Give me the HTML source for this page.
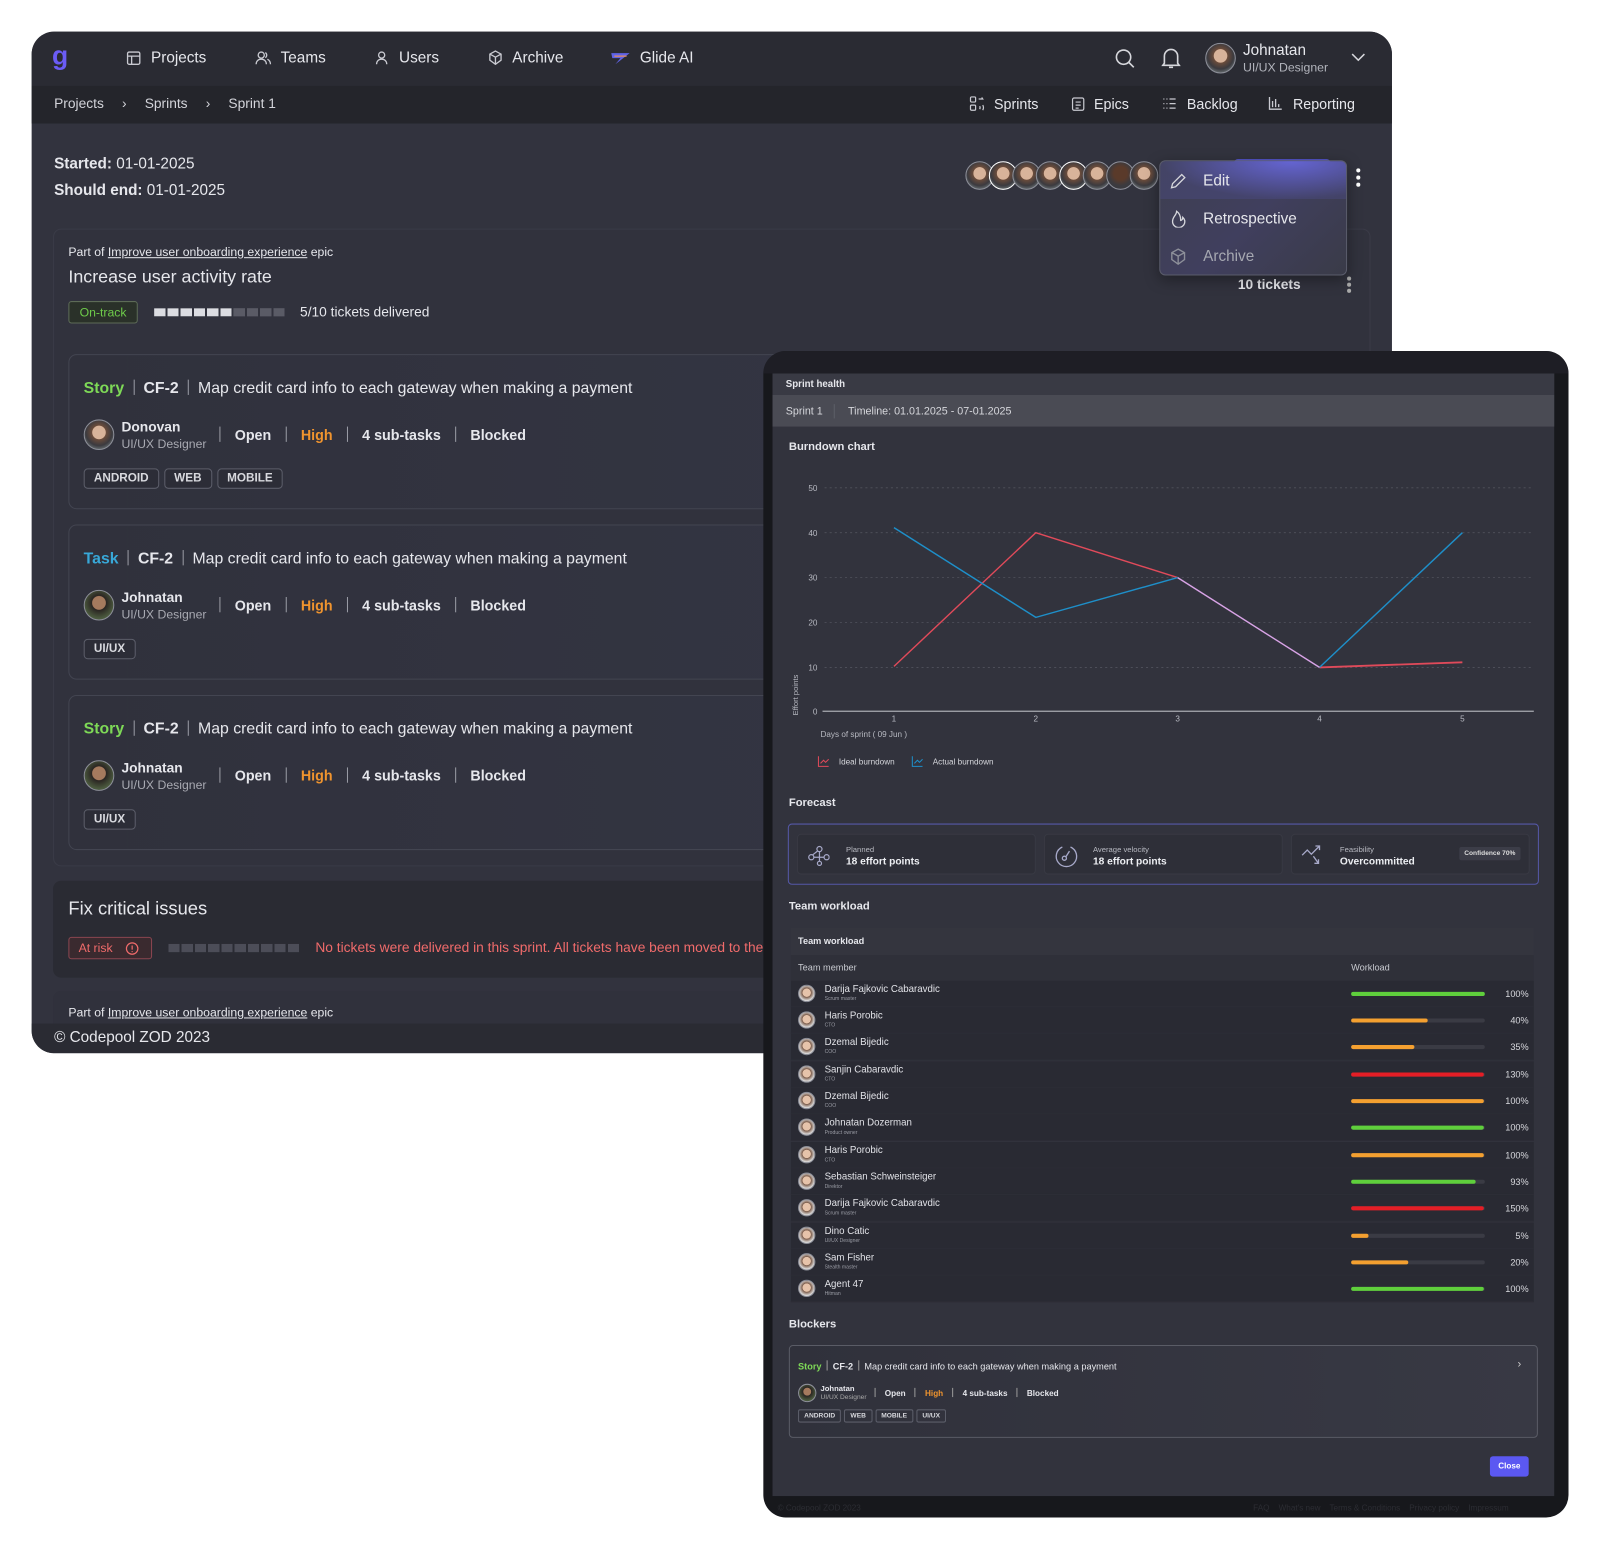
<!DOCTYPE html>
<html><head><meta charset="utf-8">
<style>
*{box-sizing:border-box;margin:0;padding:0}
html,body{width:1600px;height:1549px;overflow:hidden;background:#fff;font-family:"Liberation Sans",sans-serif}
#s{position:absolute;left:0;top:0;width:1560px;height:1510px;transform:scale(1.0205);transform-origin:0 0}
.a{position:absolute}
.t{position:absolute;white-space:nowrap;color:#e6e7ec}
.win{left:31px;top:31px;width:1333px;height:1001px;border-radius:22px;background:#32333e;overflow:hidden}
.nav{left:0;top:0;width:100%;height:53px;background:#2a2b33}
.bc{left:0;top:53px;width:100%;height:37px;background:#24252b}
.av{position:absolute;border-radius:50%;background:radial-gradient(circle at 50% 42%,#d8b39a 0 30%,#6b4c3b 32%,#3b3a3f 60%,#9aa 100%);border:1.5px solid #8d8f99}
.card{position:absolute;border:1px solid #434551;border-radius:8px;background:linear-gradient(90deg,#30313c,#353746)}
.tag{display:inline-block;border:1px solid #5c5e6a;border-radius:4px;padding:3px 9px;font-size:11.5px;font-weight:bold;color:#d8d9de;margin-right:5px;background:#2c2d37}
.sep{display:inline-block;width:1px;height:15px;background:#9a9ca5;margin:0 14px;vertical-align:-2px}
.row{font-size:14px;font-weight:bold;color:#e6e7ec}
.modal{left:748px;top:344px;width:789px;height:1143px;border-radius:22px;background:#17181c;overflow:hidden}
.wl{position:absolute;left:775px;width:728px;height:26px;border-bottom:1px solid #2c2d36;background:#292a33}
.wl .n{position:absolute;left:33px;top:3px;font-size:9.5px;color:#e2e3e8}
.wl .r{position:absolute;left:33px;top:15px;font-size:5px;color:#9a9ca5}
.wl .tr{position:absolute;left:549px;top:11px;width:131px;height:4px;border-radius:2px;background:#3a3b44}
.wl .b{position:absolute;left:0;top:0;height:4px;border-radius:2px}
.wl .p{position:absolute;right:5px;top:8px;font-size:9px;color:#d8d9de}
.wl .av{left:7px;top:4px;width:17px;height:17px;background:radial-gradient(circle at 50% 45%,#e6c3aa 0 35%,#7a5a48 38%,#ddd 70%)}
.fc{position:absolute;top:817px;width:234px;height:40px;border-radius:4px;background:#2e2f38;border:1px solid #383943}
.fc .l{position:absolute;left:47px;top:10px;font-size:7.5px;color:#b8bac2}
.fc .v{position:absolute;left:47px;top:21px;font-size:10px;font-weight:bold;color:#eceef2}
.tt{font-size:15.5px}
</style></head><body><div id="s">

<div class="a win">
 <div class="a nav"></div>
 <div class="a bc"></div>
 <div class="t" style="left:20px;top:8px;font-size:26px;font-weight:bold;color:#6b5cf6">g</div>
 <svg class="a" style="left:93px;top:19px" width="14" height="14" viewBox="0 0 14 14" fill="none" stroke="#c9cad1" stroke-width="1.3"><rect x="1" y="1" width="12" height="12" rx="1.5"/><path d="M1 5h12M5 5v8"/></svg>
 <div class="t" style="left:117px;top:17px;font-size:15px">Projects</div>
 <svg class="a" style="left:219px;top:19px" width="16" height="14" viewBox="0 0 16 14" fill="none" stroke="#c9cad1" stroke-width="1.3"><circle cx="6" cy="4" r="3"/><path d="M1 13c0-3 2-5 5-5s5 2 5 5M10 1.5a3 3 0 0 1 0 5M12 8c2 1 3 3 3 5"/></svg>
 <div class="t" style="left:244px;top:17px;font-size:15px">Teams</div>
 <svg class="a" style="left:337px;top:19px" width="12" height="14" viewBox="0 0 12 14" fill="none" stroke="#c9cad1" stroke-width="1.3"><circle cx="6" cy="4" r="3"/><path d="M1 13c0-3 2-5 5-5s5 2 5 5"/></svg>
 <div class="t" style="left:360px;top:17px;font-size:15px">Users</div>
 <svg class="a" style="left:447px;top:18px" width="15" height="15" viewBox="0 0 15 15" fill="none" stroke="#c9cad1" stroke-width="1.3"><path d="M7.5 1 13 4v6l-5.5 4L2 10V4z M2 4l5.5 3L13 4M7.5 7v7"/></svg>
 <div class="t" style="left:471px;top:17px;font-size:15px">Archive</div>
 <svg class="a" style="left:567px;top:19px" width="20" height="14" viewBox="0 0 20 14"><path d="M1 2h18L5 13l5-6H2z" fill="#5f63e8"/><path d="M4 5h12" stroke="#e58d5a" stroke-width="1.2"/></svg>
 <div class="t" style="left:596px;top:17px;font-size:15px">Glide AI</div>
 <svg class="a" style="left:1061px;top:16px" width="21" height="21" viewBox="0 0 21 21" fill="none" stroke="#d6d7dc" stroke-width="1.6"><circle cx="9" cy="9" r="7"/><path d="M14 14l5 5"/></svg>
 <svg class="a" style="left:1107px;top:15px" width="19" height="22" viewBox="0 0 19 22" fill="none" stroke="#d6d7dc" stroke-width="1.6"><path d="M3 16V9a6.5 6.5 0 0 1 13 0v7l1.5 2h-16z M7.5 20h4"/></svg>
 <div class="av" style="left:1150px;top:11px;width:30px;height:30px"></div>
 <div class="t" style="left:1187px;top:10px;font-size:15px">Johnatan</div>
 <div class="t" style="left:1187px;top:28px;font-size:12px;color:#b2b4bc">UI/UX Designer</div>
 <svg class="a" style="left:1293px;top:21px" width="14" height="9" viewBox="0 0 14 9" fill="none" stroke="#d6d7dc" stroke-width="1.5"><path d="M1 1l6 6 6-6"/></svg>
 <div class="t" style="left:22px;top:63px;font-size:13.5px;color:#d3d4da">Projects <span style="margin:0 14px">&#8250;</span> Sprints <span style="margin:0 14px">&#8250;</span> Sprint 1</div>
 <svg class="a" style="left:919px;top:63px" width="16" height="15" viewBox="0 0 16 15" fill="none" stroke="#c9cad1" stroke-width="1.2"><rect x="1" y="1" width="5" height="5" rx="1"/><rect x="1" y="9" width="5" height="5" rx="1"/><path d="M9 3h4l-1-1.5M10 10a3 3 0 0 1 0 3M13 9a5 5 0 0 1 0 5"/></svg>
 <div class="t" style="left:943px;top:63px;font-size:14px">Sprints</div>
 <svg class="a" style="left:1019px;top:64px" width="13" height="14" viewBox="0 0 13 14" fill="none" stroke="#c9cad1" stroke-width="1.2"><rect x="1" y="1" width="11" height="12" rx="1.5"/><path d="M4 5h5M4 8h5M4 11h3"/></svg>
 <div class="t" style="left:1041px;top:63px;font-size:14px">Epics</div>
 <svg class="a" style="left:1108px;top:65px" width="14" height="11" viewBox="0 0 14 11" fill="none" stroke="#c9cad1" stroke-width="1.2"><path d="M1 1h1M4 1h1M7 1h6M1 5.5h1M4 5.5h1M7 5.5h6M1 10h1M4 10h1M7 10h6"/></svg>
 <div class="t" style="left:1132px;top:63px;font-size:14px">Backlog</div>
 <svg class="a" style="left:1212px;top:63px" width="14" height="14" viewBox="0 0 14 14" fill="none" stroke="#c9cad1" stroke-width="1.3"><path d="M1 1v12h12M4 11V5M7 11V3M10 11V8"/></svg>
 <div class="t" style="left:1236px;top:63px;font-size:14px">Reporting</div>

 <div class="t" style="left:22px;top:121px;font-size:15px"><b>Started:</b> 01-01-2025</div>
 <div class="t" style="left:22px;top:147px;font-size:15px"><b>Should end:</b> 01-01-2025</div>
 <div class="av" style="left:915px;top:127px;width:28px;height:28px"></div>
 <div class="av" style="left:938px;top:127px;width:28px;height:28px;border-color:#fff"></div>
 <div class="av" style="left:961px;top:127px;width:28px;height:28px"></div>
 <div class="av" style="left:984px;top:127px;width:28px;height:28px"></div>
 <div class="av" style="left:1007px;top:127px;width:28px;height:28px;border-color:#fff"></div>
 <div class="av" style="left:1030px;top:127px;width:28px;height:28px"></div>
 <div class="av" style="left:1053px;top:127px;width:28px;height:28px;background:radial-gradient(circle at 50% 42%,#5a3a2a 0 32%,#3b3a3f 60%)"></div>
 <div class="av" style="left:1076px;top:127px;width:28px;height:28px"></div>
 <div class="a" style="left:1178px;top:125px;width:95px;height:8px;border-radius:4px;background:#5d5ef0"></div>
 <div class="a" style="left:1298px;top:134px;width:4px;height:4px;border-radius:50%;background:#fff;box-shadow:0 7px 0 #fff,0 14px 0 #fff"></div>

 <div class="card" style="left:21px;top:193px;width:1291px;height:625px;background:#31323d;border-color:#3a3b47"></div>
 <div class="t" style="left:36px;top:209px;font-size:12px">Part of <u>Improve user onboarding experience</u> epic</div>
 <div class="t" style="left:36px;top:230px;font-size:17.5px">Increase user activity rate</div>
 <div class="a" style="left:36px;top:264px;width:68px;height:22px;border:1px solid #5d6b57;border-radius:3px;background:#2a3129;color:#6ecb4a;font-size:12px;text-align:center;line-height:20px">On-track</div>
 <div class="a" style="left:120px;top:271px;height:8px;width:130px;background:repeating-linear-gradient(90deg,#dcdde2 0 11px,transparent 11px 13px);clip-path:inset(0 52px 0 0)"></div>
 <div class="a" style="left:198px;top:271px;height:8px;width:52px;background:repeating-linear-gradient(90deg,#5a5b66 0 11px,transparent 11px 13px)"></div>
 <div class="t" style="left:263px;top:267px;font-size:13.5px">5/10 tickets delivered</div>
 <div class="t" style="left:1182px;top:240px;font-size:13.5px;font-weight:bold">10 tickets</div>
 <div class="a" style="left:1289px;top:240px;width:4px;height:4px;border-radius:50%;background:#aaa;box-shadow:0 6px 0 #aaa,0 12px 0 #aaa"></div>

 <div class="card" style="left:36px;top:316px;width:1260px;height:152px"></div>
 <div class="t tt" style="left:51px;top:341px"><b style="color:#7ed957">Story</b><span class="sep" style="margin:0 9px"></span><b>CF-2</b><span class="sep" style="margin:0 9px"></span>Map credit card info to each gateway when making a payment</div>
 <div class="av" style="left:51px;top:380px;width:30px;height:30px"></div>
 <div class="t" style="left:88px;top:380px;font-size:13.5px;font-weight:bold">Donovan</div>
 <div class="t" style="left:88px;top:397px;font-size:12px;color:#a8aab2">UI/UX Designer</div>
 <div class="t row" style="left:170px;top:387px"><span class="sep"></span>Open<span class="sep"></span><span style="color:#f0942e">High</span><span class="sep"></span>4 sub-tasks<span class="sep"></span>Blocked</div>
 <div class="t" style="left:51px;top:428px"><span class="tag">ANDROID</span><span class="tag">WEB</span><span class="tag">MOBILE</span></div>

 <div class="card" style="left:36px;top:483px;width:1260px;height:152px"></div>
 <div class="t tt" style="left:51px;top:508px"><b style="color:#38a8d8">Task</b><span class="sep" style="margin:0 9px"></span><b>CF-2</b><span class="sep" style="margin:0 9px"></span>Map credit card info to each gateway when making a payment</div>
 <div class="av" style="left:51px;top:547px;width:30px;height:30px;background:radial-gradient(circle at 50% 42%,#a57a5e 0 30%,#2a2522 33%,#4b5a3e 70%)"></div>
 <div class="t" style="left:88px;top:547px;font-size:13.5px;font-weight:bold">Johnatan</div>
 <div class="t" style="left:88px;top:564px;font-size:12px;color:#a8aab2">UI/UX Designer</div>
 <div class="t row" style="left:170px;top:554px"><span class="sep"></span>Open<span class="sep"></span><span style="color:#f0942e">High</span><span class="sep"></span>4 sub-tasks<span class="sep"></span>Blocked</div>
 <div class="t" style="left:51px;top:595px"><span class="tag">UI/UX</span></div>

 <div class="card" style="left:36px;top:650px;width:1260px;height:152px"></div>
 <div class="t tt" style="left:51px;top:675px"><b style="color:#7ed957">Story</b><span class="sep" style="margin:0 9px"></span><b>CF-2</b><span class="sep" style="margin:0 9px"></span>Map credit card info to each gateway when making a payment</div>
 <div class="av" style="left:51px;top:714px;width:30px;height:30px;background:radial-gradient(circle at 50% 42%,#a57a5e 0 30%,#2a2522 33%,#4b5a3e 70%)"></div>
 <div class="t" style="left:88px;top:714px;font-size:13.5px;font-weight:bold">Johnatan</div>
 <div class="t" style="left:88px;top:731px;font-size:12px;color:#a8aab2">UI/UX Designer</div>
 <div class="t row" style="left:170px;top:721px"><span class="sep"></span>Open<span class="sep"></span><span style="color:#f0942e">High</span><span class="sep"></span>4 sub-tasks<span class="sep"></span>Blocked</div>
 <div class="t" style="left:51px;top:762px"><span class="tag">UI/UX</span></div>

 <div class="a" style="left:21px;top:832px;width:1291px;height:95px;border-radius:8px;background:#2a2b33"></div>
 <div class="t" style="left:36px;top:849px;font-size:18px">Fix critical issues</div>
 <div class="a" style="left:36px;top:887px;width:82px;height:22px;border:1px solid #8a4650;border-radius:3px;background:#3a2a2f;color:#f06b6b;font-size:12px;line-height:20px;padding-left:9px;white-space:nowrap">At risk<svg style="position:absolute;left:55px;top:4px" width="13" height="13" viewBox="0 0 13 13" fill="none" stroke="#f06b6b" stroke-width="1.2"><circle cx="6.5" cy="6.5" r="5.6"/><path d="M6.5 3.5v4M6.5 9v1"/></svg></div>
 <div class="a" style="left:134px;top:894px;height:8px;width:128px;background:repeating-linear-gradient(90deg,#4c4d58 0 11px,transparent 11px 13px)"></div>
 <div class="t" style="left:278px;top:890px;font-size:13.5px;color:#f06b6b">No tickets were delivered in this sprint. All tickets have been moved to the next sprint.</div>
 <div class="a" style="left:21px;top:940px;width:1291px;height:80px;border-radius:8px;background:#30313c"></div>
 <div class="t" style="left:36px;top:954px;font-size:12px">Part of <u>Improve user onboarding experience</u> epic</div>
 <div class="a" style="left:0;top:972px;width:100%;height:29px;background:#2a2b33"></div>
 <div class="t" style="left:22px;top:977px;font-size:15px">© Codepool ZOD 2023</div>

 <div class="a" style="left:1105px;top:126px;width:184px;height:113px;border:1px solid #5a5c6b;border-radius:6px;background:linear-gradient(135deg,#3e3f50,#403f5e 50%,#3a3b48);box-shadow:0 4px 14px rgba(0,0,0,.35)"></div>
 <div class="a" style="left:1106px;top:127px;width:182px;height:37px;border-radius:5px 5px 0 0;background:radial-gradient(ellipse at 70% 0%,rgba(110,110,240,.8),rgba(80,80,150,.3) 70%)"></div>
 <svg class="a" style="left:1115px;top:138px" width="17" height="17" viewBox="0 0 17 17" fill="none" stroke="#d6d7dc" stroke-width="1.3"><path d="M2 15l1-4L12 2l3 3-9 9z"/></svg>
 <div class="t" style="left:1148px;top:138px;font-size:15px">Edit</div>
 <svg class="a" style="left:1117px;top:175px" width="14" height="17" viewBox="0 0 14 17" fill="none" stroke="#d6d7dc" stroke-width="1.3"><path d="M5 1c0 4-4 5-4 10a6 6 0 0 0 12 0c0-2-1-3-2-4 0 2-1 3-2 3 0-4-1-7-4-9z"/></svg>
 <div class="t" style="left:1148px;top:175px;font-size:15px">Retrospective</div>
 <svg class="a" style="left:1115px;top:212px" width="17" height="17" viewBox="0 0 15 15" fill="none" stroke="#8d8f99" stroke-width="1.2"><path d="M7.5 1 13 4v6l-5.5 4L2 10V4z M2 4l5.5 3L13 4M7.5 7v7"/></svg>
 <div class="t" style="left:1148px;top:212px;font-size:15px;color:#a6a8b1">Archive</div>
</div>

<div class="a modal">
 <div class="a" style="left:0;top:0;width:100%;height:22px;background:#202128;opacity:.8"></div>
 <div class="a" style="left:9px;top:22px;width:766px;height:1100px;background:#32333d"></div>
 <div class="a" style="left:9px;top:22px;width:766px;height:21px;background:#393a44"></div>
 <div class="a" style="left:9px;top:43px;width:766px;height:31px;background:#4a4b54"></div>
</div>
<div class="t" style="left:770px;top:371px;font-size:9.5px;font-weight:bold">Sprint health</div>
<div class="t" style="left:770px;top:397px;font-size:10.5px;color:#d6d7dc">Sprint 1</div>
<div class="a" style="left:817px;top:396px;width:1px;height:14px;background:#5d5f68"></div>
<div class="t" style="left:831px;top:397px;font-size:10.5px;color:#d6d7dc">Timeline: 01.01.2025 - 07-01.2025</div>
<div class="t" style="left:773px;top:432px;font-size:11px;font-weight:bold">Burndown chart</div>

<svg class="a" style="left:760px;top:460px" width="760" height="300" viewBox="760 460 760 300" font-family="Liberation Sans" font-size="8" fill="#b8bac2">
 <g stroke="#51535d" stroke-dasharray="2 3" stroke-width="0.8">
  <line x1="808" y1="478" x2="1503" y2="478"/><line x1="808" y1="522" x2="1503" y2="522"/><line x1="808" y1="566" x2="1503" y2="566"/><line x1="808" y1="610" x2="1503" y2="610"/><line x1="808" y1="654" x2="1503" y2="654"/>
 </g>
 <line x1="806" y1="697" x2="1503" y2="697" stroke="#a9abb2" stroke-width="1.2"/>
 <g text-anchor="end"><text x="801" y="481">50</text><text x="801" y="525">40</text><text x="801" y="569">30</text><text x="801" y="613">20</text><text x="801" y="657">10</text><text x="801" y="700">0</text></g>
 <g text-anchor="middle"><text x="876" y="707">1</text><text x="1015" y="707">2</text><text x="1154" y="707">3</text><text x="1293" y="707">4</text><text x="1433" y="707">5</text></g>
 <text x="804" y="722">Days of sprint ( 09 Jun )</text>
 <text transform="translate(782 701) rotate(-90)" font-size="7.5">Effort points</text>
 <polyline points="876,653 1015,522 1154,566" fill="none" stroke="#e04a5a" stroke-width="1.4"/>
 <polyline points="1293,654 1433,649" fill="none" stroke="#e04a5a" stroke-width="1.8"/>
 <polyline points="876,517 1015,605 1154,566" fill="none" stroke="#1e8fc9" stroke-width="1.4"/>
 <polyline points="1293,654 1433,522" fill="none" stroke="#1e8fc9" stroke-width="1.4"/>
 <polyline points="1154,566 1293,654" fill="none" stroke="#d8a3e6" stroke-width="1.4"/>
 <path d="M802 741v10h10M804 748l3-3 2 2 3-3" fill="none" stroke="#e04a5a" stroke-width="1"/>
 <text x="822" y="749" fill="#d6d7dc">Ideal burndown</text>
 <path d="M894 741v10h10M896 748l3-3 2 2 3-3" fill="none" stroke="#1e8fc9" stroke-width="1"/>
 <text x="914" y="749" fill="#d6d7dc">Actual burndown</text>
 <line x1="773" y1="766" x2="1507" y2="766" stroke="#40414b"/>
</svg>

<div class="t" style="left:773px;top:781px;font-size:11px;font-weight:bold">Forecast</div>
<div class="a" style="left:772px;top:807px;width:736px;height:60px;border:1px solid #5558a8;border-radius:4px"></div>
<div class="fc" style="left:781px"><svg class="a" style="left:9px;top:9px" width="22" height="22" viewBox="0 0 22 22" fill="none" stroke="#a7a9c9" stroke-width="1.2"><circle cx="4" cy="13" r="2.5"/><circle cx="12" cy="5" r="2.5"/><circle cx="12" cy="19" r="2"/><circle cx="19" cy="13" r="2.5"/><path d="M6.5 13h10M12 7.5v9.5M5 11l5-4"/></svg><div class="l">Planned</div><div class="v">18 effort points</div></div>
<div class="fc" style="left:1023px"><svg class="a" style="left:9px;top:9px" width="24" height="24" viewBox="0 0 24 24" fill="none" stroke="#a7a9c9" stroke-width="1.3"><path d="M8 3a10 10 0 1 0 8 0"/><circle cx="10" cy="14" r="2"/><path d="M11.5 12.5 15 7"/></svg><div class="l">Average velocity</div><div class="v">18 effort points</div></div>
<div class="fc" style="left:1265px"><svg class="a" style="left:9px;top:9px" width="24" height="22" viewBox="0 0 24 22" fill="none" stroke="#a7a9c9" stroke-width="1.3"><path d="M1 11l5-5 4 4 8-8M14 2h4v4M12 12l5 7M17 15v4h-4"/></svg><div class="l">Feasibility</div><div class="v">Overcommitted</div><div class="a" style="right:8px;top:12px;background:#3c3d48;border-radius:2px;font-size:6.5px;font-weight:bold;color:#ddd;padding:3px 5px">Confidence 70%</div></div>

<div class="t" style="left:773px;top:882px;font-size:11px;font-weight:bold">Team workload</div>
<div class="a" style="left:775px;top:909px;width:728px;height:27px;background:#34353e"></div>
<div class="t" style="left:782px;top:917px;font-size:9px;font-weight:bold">Team workload</div>
<div class="a" style="left:775px;top:936px;width:728px;height:25px;background:#2f3039"></div>
<div class="t" style="left:782px;top:943px;font-size:9px;color:#c8cad0">Team member</div>
<div class="t" style="left:1324px;top:943px;font-size:9px;color:#c8cad0">Workload</div>

<div class="wl" style="top:961px"><div class="av"></div><div class="n">Darija Fajkovic Cabaravdic</div><div class="r">Scrum master</div><div class="tr"><div class="b" style="width:131px;background:#5fcf3c"></div></div><div class="p">100%</div></div>
<div class="wl" style="top:987px"><div class="av"></div><div class="n">Haris Porobic</div><div class="r">CTO</div><div class="tr"><div class="b" style="width:75px;background:#f4a030"></div></div><div class="p">40%</div></div>
<div class="wl" style="top:1013px"><div class="av"></div><div class="n">Dzemal Bijedic</div><div class="r">COO</div><div class="tr"><div class="b" style="width:62px;background:#f4a030"></div></div><div class="p">35%</div></div>
<div class="wl" style="top:1040px"><div class="av"></div><div class="n">Sanjin Cabaravdic</div><div class="r">CTO</div><div class="tr"><div class="b" style="width:130px;background:#e41e26"></div></div><div class="p">130%</div></div>
<div class="wl" style="top:1066px"><div class="av"></div><div class="n">Dzemal Bijedic</div><div class="r">COO</div><div class="tr"><div class="b" style="width:130px;background:#f4a030"></div></div><div class="p">100%</div></div>
<div class="wl" style="top:1092px"><div class="av"></div><div class="n">Johnatan Dozerman</div><div class="r">Product owner</div><div class="tr"><div class="b" style="width:130px;background:#5fcf3c"></div></div><div class="p">100%</div></div>
<div class="wl" style="top:1119px"><div class="av"></div><div class="n">Haris Porobic</div><div class="r">CTO</div><div class="tr"><div class="b" style="width:130px;background:#f4a030"></div></div><div class="p">100%</div></div>
<div class="wl" style="top:1145px"><div class="av"></div><div class="n">Sebastian Schweinsteiger</div><div class="r">Direktor</div><div class="tr"><div class="b" style="width:122px;background:#5fcf3c"></div></div><div class="p">93%</div></div>
<div class="wl" style="top:1171px"><div class="av"></div><div class="n">Darija Fajkovic Cabaravdic</div><div class="r">Scrum master</div><div class="tr"><div class="b" style="width:130px;background:#e41e26"></div></div><div class="p">150%</div></div>
<div class="wl" style="top:1198px"><div class="av"></div><div class="n">Dino Catic</div><div class="r">UI/UX Designer</div><div class="tr"><div class="b" style="width:17px;background:#f4a030"></div></div><div class="p">5%</div></div>
<div class="wl" style="top:1224px"><div class="av"></div><div class="n">Sam Fisher</div><div class="r">Stealth master</div><div class="tr"><div class="b" style="width:56px;background:#f4a030"></div></div><div class="p">20%</div></div>
<div class="wl" style="top:1250px"><div class="av"></div><div class="n">Agent 47</div><div class="r">Hitman</div><div class="tr"><div class="b" style="width:130px;background:#5fcf3c"></div></div><div class="p">100%</div></div>

<div class="t" style="left:773px;top:1292px;font-size:11px;font-weight:bold">Blockers</div>
<div class="a" style="left:773px;top:1318px;width:734px;height:91px;border:1px solid #5a5c66;border-radius:4px;background:linear-gradient(90deg,#30313b,#383944)"></div>
<div class="t" style="left:782px;top:1333px;font-size:9px"><b style="color:#7ed957">Story</b><span style="display:inline-block;width:1px;height:10px;background:#999;margin:0 5px;vertical-align:-1px"></span><b>CF-2</b><span style="display:inline-block;width:1px;height:10px;background:#999;margin:0 5px;vertical-align:-1px"></span>Map credit card info to each gateway when making a payment</div>
<div class="t" style="left:1487px;top:1331px;font-size:11px;color:#ccc">&#8250;</div>
<div class="av" style="left:782px;top:1356px;width:18px;height:18px;background:radial-gradient(circle at 50% 42%,#a57a5e 0 30%,#2a2522 33%,#4b5a3e 70%)"></div>
<div class="t" style="left:804px;top:1356px;font-size:7.5px;font-weight:bold">Johnatan</div>
<div class="t" style="left:804px;top:1366px;font-size:6.5px;color:#aaa">UI/UX Designer</div>
<div class="t" style="left:857px;top:1360px;font-size:8px;font-weight:bold"><span style="display:inline-block;width:1px;height:9px;background:#999;margin:0 9px 0 0;vertical-align:-1px"></span>Open<span style="display:inline-block;width:1px;height:9px;background:#999;margin:0 9px;vertical-align:-1px"></span><span style="color:#f0942e">High</span><span style="display:inline-block;width:1px;height:9px;background:#999;margin:0 9px;vertical-align:-1px"></span>4 sub-tasks<span style="display:inline-block;width:1px;height:9px;background:#999;margin:0 9px;vertical-align:-1px"></span>Blocked</div>
<div class="t" style="left:782px;top:1384px;font-size:6.5px;font-weight:bold;color:#d8d9de"><span style="border:1px solid #5c5e6a;border-radius:2px;padding:2px 5px;margin-right:3px">ANDROID</span><span style="border:1px solid #5c5e6a;border-radius:2px;padding:2px 5px;margin-right:3px">WEB</span><span style="border:1px solid #5c5e6a;border-radius:2px;padding:2px 5px;margin-right:3px">MOBILE</span><span style="border:1px solid #5c5e6a;border-radius:2px;padding:2px 5px">UI/UX</span></div>
<div class="a" style="left:1460px;top:1427px;width:38px;height:20px;border-radius:3px;background:#5b58f2;color:#fff;font-size:8px;font-weight:bold;text-align:center;line-height:20px">Close</div>
<div class="t" style="left:762px;top:1473px;font-size:8px;color:#2c2d33">© Codepool ZOD 2023</div>
<div class="t" style="left:1228px;top:1473px;font-size:8px;color:#2c2d33">FAQ &nbsp;&nbsp; What's new &nbsp;&nbsp; Terms &amp; Conditions &nbsp;&nbsp; Privacy policy &nbsp;&nbsp; Impressum</div>
</div></body></html>
